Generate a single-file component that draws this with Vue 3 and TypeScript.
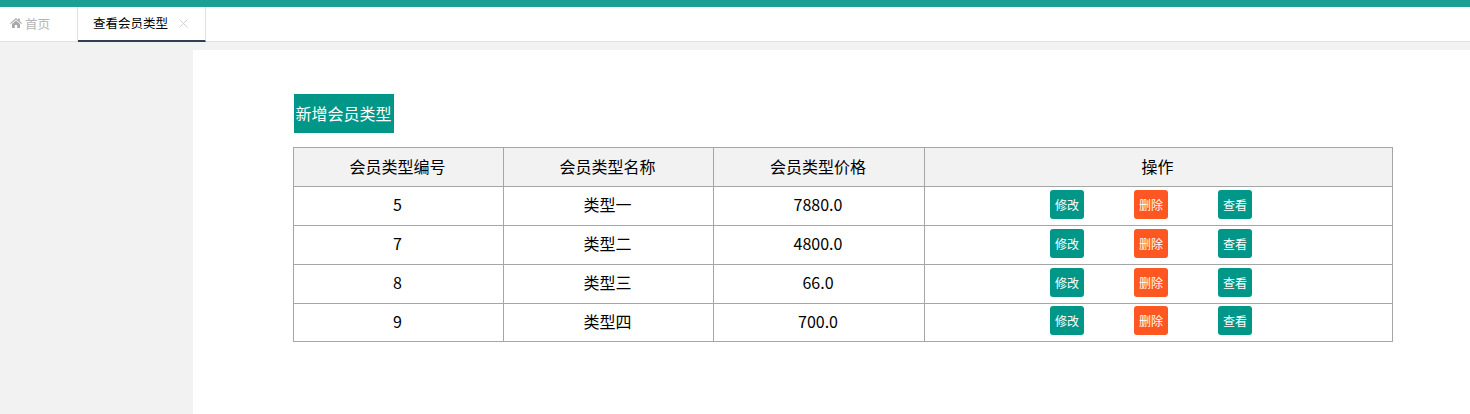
<script setup lang="ts">
interface MemberType {
  id: number
  name: string
  price: string
}

const memberTypes: MemberType[] = [
  { id: 5, name: '类型一', price: '7880.0' },
  { id: 7, name: '类型二', price: '4800.0' },
  { id: 8, name: '类型三', price: '66.0' },
  { id: 9, name: '类型四', price: '700.0' }
]
</script>

<template>
  <div class="page">
    <div class="top-line"></div>
    <div class="tabs">
      <div class="tab home">
        <svg class="home-icon" viewBox="0 0 12 10" width="12" height="10">
          <path d="M6 0 L8.2 1.9 V0.6 H9.8 V3.3 L12 5.2 L11.3 6 L6 1.5 L0.7 6 L0 5.2 Z M2 6 L6 2.6 L10 6 V10 H7.2 V7 H4.8 V10 H2 Z" fill="#a9a9a9" />
        </svg>
        <span>首页</span>
      </div>
      <div class="tab active">
        <span>查看会员类型</span>
        <svg class="close" viewBox="0 0 9 9" width="9" height="9">
          <path d="M0.5 0.5 L8.5 8.5 M8.5 0.5 L0.5 8.5" stroke="#cfcfcf" stroke-width="1" fill="none" />
        </svg>
      </div>
    </div>
    <div class="body">
      <aside class="side"></aside>
      <main class="main">
        <button class="add-btn">新增会员类型</button>
        <table class="grid">
          <thead>
            <tr>
              <th class="c1">会员类型编号</th>
              <th class="c2">会员类型名称</th>
              <th class="c3">会员类型价格</th>
              <th>操作</th>
            </tr>
          </thead>
          <tbody>
            <tr v-for="item in memberTypes" :key="item.id">
              <td>{{ item.id }}</td>
              <td>{{ item.name }}</td>
              <td>{{ item.price }}</td>
              <td>
                <div class="actions">
                  <a class="btn">修改</a>
                  <a class="btn danger">删除</a>
                  <a class="btn">查看</a>
                </div>
              </td>
            </tr>
          </tbody>
        </table>
      </main>
    </div>
  </div>
</template>

<style>
html,
body {
  margin: 0;
  background: #fff;
  overflow: hidden;
}
</style>

<style scoped>
.page {
  height: 414px;
  display: flex;
  flex-direction: column;
  font-family: "Noto Sans CJK SC", "Noto Sans", sans-serif;
  color: #000;
}

.top-line {
  height: 7px;
  background: #1aa094;
}

.tabs {
  height: 34px;
  display: flex;
  background: #fff;
  border-bottom: 1px solid #e2e2e2;
  font-size: 12.5px;
}

.tab {
  display: flex;
  align-items: center;
  box-sizing: border-box;
}

.home {
  width: 78px;
  height: 34px;
  padding: 0 0 2px 10px;
  gap: 3px;
  color: #b5b5b5;
  border-right: 1px solid #e2e2e2;
}

.active {
  width: 128px;
  height: 35px;
  padding: 0 0 3px 15px;
  gap: 11px;
  border-right: 1px solid #e2e2e2;
  border-bottom: 2px solid #2f4056;
}

.close {
  margin-top: 2px;
}

.body {
  flex: 1;
  display: flex;
  background: #f2f2f2;
  padding-top: 8px;
  min-height: 0;
}

.side {
  width: 193px;
  flex: none;
}

.main {
  flex: 1;
  background: #fff;
  padding: 44px 0 0 100px;
}

.add-btn {
  display: block;
  width: 100px;
  height: 39px;
  margin: 0 0 14px 1px;
  padding: 0 1px 2px 0;
  border: 0;
  background: #009688;
  color: #fff;
  font: inherit;
  font-size: 16px;
}

.grid {
  width: 1100px;
  table-layout: fixed;
  border-collapse: collapse;
  font-size: 16px;
  text-align: center;
}

.grid th,
.grid td {
  border: 1px solid #a6a6a6;
  height: 39px;
  padding: 0 2px 4px 0;
  box-sizing: border-box;
  font-weight: 400;
}

.grid th {
  background: #f2f2f2;
  padding-bottom: 2px;
}

.grid tbody tr:last-child td {
  height: 38px;
}

.c1,
.c2 {
  width: 210px;
}

.c3 {
  width: 211px;
}

.actions {
  display: flex;
  justify-content: flex-start;
  gap: 50px;
  padding-left: 125px;
}

.btn {
  width: 34px;
  height: 29px;
  line-height: 29px;
  border-radius: 3px;
  background: #009688;
  color: #fff;
  font-size: 12px;
}

.danger {
  background: #ff5722;
}
</style>
